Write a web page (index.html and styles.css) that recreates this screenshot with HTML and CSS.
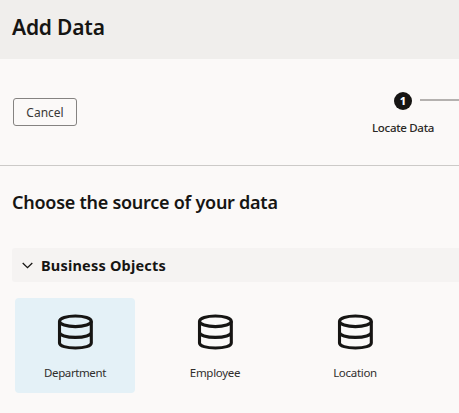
FILE: index.html
```html
<!DOCTYPE html>
<html lang="en">
<head>
<meta charset="utf-8">
<title>Add Data</title>
<link rel="stylesheet" href="styles.css">
</head>
<body>
<svg width="0" height="0" class="defs" aria-hidden="true">
  <symbol id="database" viewBox="0 0 36 36">
    <ellipse cx="18.4" cy="7.3" rx="15.9" ry="5.3"/>
    <path d="M2.5 7.3V29C2.5 32 9.4 34 18.4 34S34.3 32 34.3 29V7.3M2.5 18.2C2.5 21.2 9.4 23.4 18.4 23.4S34.3 21.2 34.3 18.2"/>
  </symbol>
</svg>
<header class="header"><h1>Add Data</h1></header>
<div class="toolbar">
  <button class="cancel">Cancel</button>
  <div class="train">
    <div class="step">
      <span class="badge">1</span>
      <span class="step-label">Locate Data</span>
    </div>
    <div class="connector"></div>
  </div>
</div>
<main class="content">
  <h2>Choose the source of your data</h2>
  <div class="section">
    <svg class="chevron" viewBox="0 0 11 7"><path d="M.7 1L5.5 5.6L10.3 1"/></svg>
    <h3>Business Objects</h3>
  </div>
  <div class="tiles">
    <div class="tile selected"><svg class="icon"><use href="#database"/></svg><span class="department">Department</span></div>
    <div class="tile"><svg class="icon"><use href="#database"/></svg><span>Employee</span></div>
    <div class="tile"><svg class="icon"><use href="#database"/></svg><span>Location</span></div>
  </div>
</main>
</body>
</html>
```

FILE: styles.css
```css
* { box-sizing: border-box; }
body {
  margin: 0;
  height: 413px;
  overflow: hidden;
  background: #fbf9f8;
  color: #161513;
  font-family: "Noto Sans", sans-serif;
}
.defs { display: block; }
h1, h2, h3 { margin: 0; font-weight: 600; white-space: nowrap; }
.header {
  height: 59px;
  padding: 12px 12px 0;
  background: #f0eeec;
}
h1 { font-size: 21px; line-height: 31px; letter-spacing: -0.2px; }
.toolbar {
  display: flex;
  align-items: flex-start;
  justify-content: space-between;
  height: 107px;
  padding: 33px 0 0 13px;
  border-bottom: 1px solid #cccac8;
}
.cancel {
  width: 64px;
  height: 28px;
  margin-top: 6px;
  padding: 1px 0 0;
  border: 1px solid #858381;
  border-radius: 3px;
  background: transparent;
  color: #3a3836;
  font: 400 12px/24px "Noto Sans", sans-serif;
  letter-spacing: 0;
}
.train { display: flex; align-items: flex-start; width: 96px; }
.step {
  display: flex;
  flex-direction: column;
  align-items: center;
  flex: none;
  width: 80px;
  margin-right: -23px;
}
.badge {
  width: 18px;
  height: 18px;
  border-radius: 50%;
  background: #161513;
  color: #fff;
  font-size: 11px;
  font-weight: 800;
  line-height: 17px;
  text-align: center;
}
.step-label {
  margin-top: 9px;
  color: #2a2826;
  font-size: 11.5px;
  font-weight: 500;
  line-height: 18px;
  letter-spacing: -0.3px;
  white-space: nowrap;
}
.connector { flex: 1; height: 2px; margin-top: 7px; background: #b4b1af; }
.content { padding: 21px 0 0 12px; }
h2 { font-size: 18px; line-height: 30px; letter-spacing: -0.26px; }
.section {
  display: flex;
  align-items: center;
  gap: 8px;
  height: 34px;
  margin-top: 31px;
  padding-left: 10px;
  border-radius: 3px 0 0 3px;
  background: #f5f3f2;
}
.chevron { width: 11px; height: 7px; fill: none; stroke: #161513; stroke-width: 1.3; }
h3 { font-size: 14.5px; font-weight: 700; line-height: 24px; letter-spacing: 0.2px; }
.tiles { display: flex; gap: 20px; padding: 16px 0 0 3px; }
.tile {
  display: flex;
  flex-direction: column;
  align-items: center;
  flex: none;
  width: 120px;
  height: 95px;
  padding-top: 16px;
  border-radius: 4px;
  font-size: 11.5px;
  line-height: 18px;
  letter-spacing: -0.3px;
}
.tile span { margin-top: 14px; color: #302e2c; }
.tile .department { letter-spacing: -0.4px; }
.selected { background: #e4f1f7; }
.icon { width: 36px; height: 36px; fill: none; stroke: #161513; stroke-width: 3.1; }
```
